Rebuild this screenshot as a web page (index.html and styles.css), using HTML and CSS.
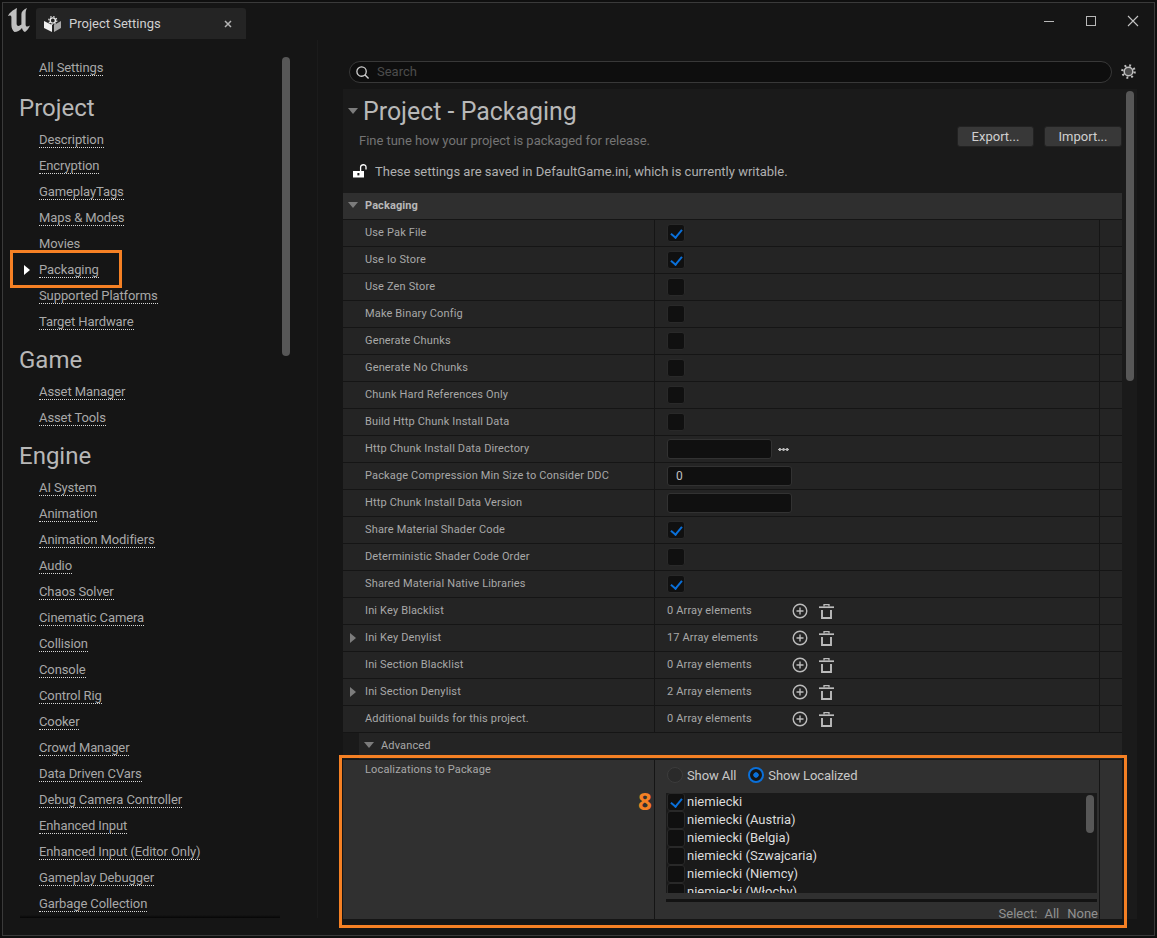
FILE: index.html
```html
<!DOCTYPE html>
<html lang="en">
<head>
  <meta charset="UTF-8">
  <title>Project Settings</title>
  <link rel="stylesheet" href="styles.css">
</head>
<body>
  <div class="window">
    <div class="titlebar">
      <svg class="ue-logo" viewBox="0 0 22 24"><path d="M0 8 C1 5 5 2 9 0 L8.6 2.5 V15.5 C8.6 18 10.5 19 13.4 16.6 V6 C13.4 3.5 15.5 1.5 19 0 C18 2 17.6 3.5 17.6 6 V16.5 C17.6 18.5 19 19.5 22 17.5 C21 20 19 22.5 17 24 C15.5 23.5 14.4 22 14 20 C12 22.5 9 24 6.5 24 C4.5 22.5 3.4 20 3.4 17 V9 C3.4 7.5 2 7 0 8 Z" fill="#c0c0c0"/></svg>
      <div class="tab">
        <svg class="tab-icon" viewBox="0 0 17 17"><path d="M0 6 L8 10 V17 L0 13 Z" fill="#f0f0f0"/><path d="M17 6 L10 10 V17 L17 13 Z" fill="#a8a8a8"/><circle cx="8.8" cy="5.5" r="2.6" fill="none" stroke="#e8e8e8" stroke-width="1.4"/><circle cx="8.8" cy="5.5" r="4" fill="none" stroke="#e8e8e8" stroke-width="1.2" stroke-dasharray="1.4 1.74"/></svg>
        <span class="tab-name">Project Settings</span>
        <svg class="tab-close" viewBox="0 0 8 8"><path d="M1 1 L7 7 M7 1 L1 7" stroke="#b4b4b4" stroke-width="1.5"/></svg>
      </div>
      <div class="win-buttons">
        <svg viewBox="0 0 12 12"><path d="M1 6.5 H11" stroke="#b8b8b8" stroke-width="1"/></svg>
        <svg viewBox="0 0 12 12"><rect x="1.5" y="1.5" width="9" height="9" fill="none" stroke="#b8b8b8" stroke-width="1"/></svg>
        <svg viewBox="0 0 12 12"><path d="M1 1 L11 11 M11 1 L1 11" stroke="#c4c4c4" stroke-width="1.1"/></svg>
      </div>
    </div>

    <div class="columns">
      <div class="sidebar">
        <div class="sidebar-scroll">
          <a class="side-link first"><span>All Settings</span></a>
          <h2>Project</h2>
          <a class="side-link"><span>Description</span></a>
          <a class="side-link"><span>Encryption</span></a>
          <a class="side-link"><span>GameplayTags</span></a>
          <a class="side-link"><span>Maps &amp; Modes</span></a>
          <a class="side-link"><span class="plain">Movies</span></a>
          <a class="side-link current"><i class="side-arrow"></i><span>Packaging</span></a>
          <a class="side-link"><span>Supported Platforms</span></a>
          <a class="side-link"><span>Target Hardware</span></a>
          <h2>Game</h2>
          <a class="side-link"><span>Asset Manager</span></a>
          <a class="side-link"><span>Asset Tools</span></a>
          <h2>Engine</h2>
          <a class="side-link"><span>AI System</span></a>
          <a class="side-link"><span>Animation</span></a>
          <a class="side-link"><span>Animation Modifiers</span></a>
          <a class="side-link"><span>Audio</span></a>
          <a class="side-link"><span>Chaos Solver</span></a>
          <a class="side-link"><span>Cinematic Camera</span></a>
          <a class="side-link"><span>Collision</span></a>
          <a class="side-link"><span>Console</span></a>
          <a class="side-link"><span>Control Rig</span></a>
          <a class="side-link"><span>Cooker</span></a>
          <a class="side-link"><span>Crowd Manager</span></a>
          <a class="side-link"><span>Data Driven CVars</span></a>
          <a class="side-link"><span>Debug Camera Controller</span></a>
          <a class="side-link"><span>Enhanced Input</span></a>
          <a class="side-link"><span>Enhanced Input (Editor Only)</span></a>
          <a class="side-link"><span>Gameplay Debugger</span></a>
          <a class="side-link"><span>Garbage Collection</span></a>
        </div>
        <div class="side-thumb"></div>
      </div>

      <div class="main">
        <div class="search-row">
          <div class="search">
            <svg class="search-icon" viewBox="0 0 16 16"><circle cx="7" cy="7" r="5" fill="none" stroke="#d0d0d0" stroke-width="1.4"/><path d="M10.5 10.5 L14.5 14.5" stroke="#d0d0d0" stroke-width="1.5"/></svg>
            <span>Search</span>
          </div>
          <svg class="gear" viewBox="0 0 16 16"><circle cx="8" cy="8" r="4.6" fill="#4a4a4a" stroke="#c0c0c0" stroke-width="1.6"/><circle cx="8" cy="8" r="6.6" fill="none" stroke="#c0c0c0" stroke-width="2.4" stroke-dasharray="2 3.18"/></svg>
        </div>

        <div class="details">
          <div class="details-scroll">
            <div class="page-head">
              <div class="page-title"><i class="tri-down"></i><h1>Project - Packaging</h1></div>
              <div class="page-sub">
                <p>Fine tune how your project is packaged for release.</p>
                <div class="page-buttons"><button>Export...</button><button>Import...</button></div>
              </div>
              <div class="page-note">
                <svg class="lock" viewBox="0 0 14 14"><path d="M0 7 H11 V13.5 H0 Z" fill="#fff"/><path d="M7.6 7 V3 C7.6 0 13 0 13 3 V5.5" fill="none" stroke="#fff" stroke-width="1.3"/><rect x="4.4" y="9" width="2" height="2.4" fill="#1a1a1a"/></svg>
                <span>These settings are saved in DefaultGame.ini, which is currently writable.</span>
              </div>
            </div>

            <div class="section-head"><i class="tri-down"></i>Packaging</div>

            <div class="row"><div class="name">Use Pak File</div><div class="value"><i class="check on"></i></div><div class="tail"></div></div>
            <div class="row"><div class="name">Use Io Store</div><div class="value"><i class="check on"></i></div><div class="tail"></div></div>
            <div class="row"><div class="name">Use Zen Store</div><div class="value"><i class="check"></i></div><div class="tail"></div></div>
            <div class="row"><div class="name">Make Binary Config</div><div class="value"><i class="check"></i></div><div class="tail"></div></div>
            <div class="row"><div class="name">Generate Chunks</div><div class="value"><i class="check"></i></div><div class="tail"></div></div>
            <div class="row"><div class="name">Generate No Chunks</div><div class="value"><i class="check"></i></div><div class="tail"></div></div>
            <div class="row"><div class="name">Chunk Hard References Only</div><div class="value"><i class="check"></i></div><div class="tail"></div></div>
            <div class="row"><div class="name">Build Http Chunk Install Data</div><div class="value"><i class="check"></i></div><div class="tail"></div></div>
            <div class="row"><div class="name">Http Chunk Install Data Directory</div><div class="value"><div class="field short"></div><span class="dots"></span></div><div class="tail"></div></div>
            <div class="row"><div class="name">Package Compression Min Size to Consider DDC</div><div class="value"><div class="field">0</div></div><div class="tail"></div></div>
            <div class="row"><div class="name">Http Chunk Install Data Version</div><div class="value"><div class="field"></div></div><div class="tail"></div></div>
            <div class="row"><div class="name">Share Material Shader Code</div><div class="value"><i class="check on"></i></div><div class="tail"></div></div>
            <div class="row"><div class="name">Deterministic Shader Code Order</div><div class="value"><i class="check"></i></div><div class="tail"></div></div>
            <div class="row"><div class="name">Shared Material Native Libraries</div><div class="value"><i class="check on"></i></div><div class="tail"></div></div>
            <div class="row"><div class="name">Ini Key Blacklist</div><div class="value"><span class="count">0 Array elements</span><svg class="add" viewBox="0 0 16 16"><use href="#icon-add"/></svg><svg class="trash" viewBox="0 0 15 15"><use href="#icon-trash"/></svg></div><div class="tail"></div></div>
            <div class="row"><div class="name"><i class="tri-right"></i>Ini Key Denylist</div><div class="value"><span class="count">17 Array elements</span><svg class="add" viewBox="0 0 16 16"><use href="#icon-add"/></svg><svg class="trash" viewBox="0 0 15 15"><use href="#icon-trash"/></svg></div><div class="tail"></div></div>
            <div class="row"><div class="name">Ini Section Blacklist</div><div class="value"><span class="count">0 Array elements</span><svg class="add" viewBox="0 0 16 16"><use href="#icon-add"/></svg><svg class="trash" viewBox="0 0 15 15"><use href="#icon-trash"/></svg></div><div class="tail"></div></div>
            <div class="row"><div class="name"><i class="tri-right"></i>Ini Section Denylist</div><div class="value"><span class="count">2 Array elements</span><svg class="add" viewBox="0 0 16 16"><use href="#icon-add"/></svg><svg class="trash" viewBox="0 0 15 15"><use href="#icon-trash"/></svg></div><div class="tail"></div></div>
            <div class="row"><div class="name">Additional builds for this project.</div><div class="value"><span class="count">0 Array elements</span><svg class="add" viewBox="0 0 16 16"><use href="#icon-add"/></svg><svg class="trash" viewBox="0 0 15 15"><use href="#icon-trash"/></svg></div><div class="tail"></div></div>

            <div class="advanced"><div class="advanced-inner"><i class="tri-down small"></i>Advanced</div></div>

            <div class="row tall">
              <div class="name">Localizations to Package</div>
              <div class="value">
                <div class="radios">
                  <i class="radio"></i><span>Show All</span>
                  <i class="radio on"></i><span>Show Localized</span>
                </div>
                <div class="culture-list">
                  <div class="culture"><i class="check on"></i>niemiecki</div>
                  <div class="culture"><i class="check"></i>niemiecki (Austria)</div>
                  <div class="culture"><i class="check"></i>niemiecki (Belgia)</div>
                  <div class="culture"><i class="check"></i>niemiecki (Szwajcaria)</div>
                  <div class="culture"><i class="check"></i>niemiecki (Niemcy)</div>
                  <div class="culture"><i class="check"></i>niemiecki (Włochy)</div>
                  <div class="list-thumb"></div>
                </div>
                <div class="list-hbar"></div>
                <div class="select-links"><span>Select:</span><span>All</span><span>None</span></div>
              </div>
              <div class="tail"></div>
            </div>
          </div>
          <div class="details-thumb"></div>
        </div>
      </div>
    </div>
  </div>

  <!-- callouts drawn over the screenshot -->
  <div class="callout callout-nav"></div>
  <div class="callout callout-loc"></div>
  <div class="callout-num">8</div>

  <svg class="icon-defs" width="0" height="0">
    <symbol id="icon-add" viewBox="0 0 16 16"><circle cx="8" cy="8" r="6.8" fill="none" stroke="#bcbcbc" stroke-width="1.4"/><path d="M8 4.5 V11.5 M4.5 8 H11.5" stroke="#bcbcbc" stroke-width="1.4"/></symbol>
    <symbol id="icon-trash" viewBox="0 0 15 15"><path d="M0 3.2 H15" stroke="#bcbcbc" stroke-width="1.7"/><path d="M5 2.6 V0.7 H10 V2.6" fill="none" stroke="#bcbcbc" stroke-width="1.3"/><path d="M3 6 V14 H12 V6" fill="none" stroke="#bcbcbc" stroke-width="1.9"/></symbol>
  </svg>
</body>
</html>
```

FILE: styles.css
```css
* {
  margin: 0;
  padding: 0;
  box-sizing: border-box;
}
html, body {
  height: 100%;
}
body {
  background: #0f0f0f;
  font-family: Roboto, sans-serif;
  font-size: 12px;
  color: #b8b8b8;
  overflow: hidden;
  position: relative;
}
.icon-defs {
  position: absolute;
}
.window {
  margin: 2px 2px 2px 2px;
  height: calc(100% - 4px);
  background: #151515;
  border: 1px solid #3a3a3a;
  display: flex;
  flex-direction: column;
}

/* title bar */
.titlebar {
  height: 37px;
  flex: none;
  display: flex;
  align-items: flex-start;
  position: relative;
}
.ue-logo {
  width: 22px;
  height: 24px;
  margin: 5px 0 0 5px;
}
.tab {
  width: 210px;
  height: 31px;
  margin: 5px 0 0 6px;
  background: #242424;
  border-radius: 3px 3px 0 0;
  display: flex;
  align-items: center;
  padding-left: 8px;
}
.tab-icon {
  width: 17px;
  height: 17px;
}
.tab-name {
  margin-left: 8px;
  font-size: 13px;
  color: #d0d0d0;
  flex: 1;
}
.tab-close {
  width: 8px;
  height: 8px;
  margin-right: 14px;
}
.win-buttons {
  margin-left: auto;
  display: flex;
  gap: 30px;
  padding: 12px 15px 0 0;
}
.win-buttons svg {
  width: 12px;
  height: 12px;
}

.columns {
  flex: 1;
  display: flex;
  min-height: 0;
}

/* left nav */
.sidebar {
  width: 315px;
  flex: none;
  border-right: 1px solid #1b1b1b;
  position: relative;
  height: 878px;
}
.sidebar-scroll {
  height: 100%;
  overflow: hidden;
  padding-top: 15px;
  position: relative;
}
.sidebar-scroll::after {
  content: "";
  position: absolute;
  left: 17px;
  width: 260px;
  bottom: 0;
  height: 3px;
  background: linear-gradient(to bottom, rgba(0,0,0,0), #050505);
}
.side-thumb {
  position: absolute;
  left: 279px;
  top: 17px;
  width: 8px;
  height: 299px;
  border-radius: 4px;
  background: #575757;
}
.sidebar h2 {
  font-weight: 400;
  font-size: 24px;
  line-height: 44px;
  height: 44px;
  padding: 3px 0 0 16px;
  color: #b8b8b8;
}
.side-link {
  display: flex;
  align-items: center;
  height: 26px;
  padding-left: 36px;
  font-size: 13px;
  letter-spacing: -0.1px;
  color: #a8a8a8;
}
.side-link.first {
  margin-bottom: 2px;
}
.side-link span {
  border-bottom: 1px dotted #d8d8d8;
  line-height: 14px;
}
.side-link span.plain {
  border-bottom: none;
}
.side-link.current {
  padding-left: 21px;
}
.side-arrow {
  width: 0;
  height: 0;
  border-left: 6px solid #fff;
  border-top: 5px solid transparent;
  border-bottom: 5px solid transparent;
  margin-right: 9px;
}

/* right side */
.main {
  flex: 1;
  padding-left: 25px;
  min-width: 0;
}
.search-row {
  height: 49px;
  display: flex;
  align-items: flex-start;
  padding: 21px 0 0 6px;
}
.search {
  width: 763px;
  height: 22px;
  background: #0e0e0e;
  border: 1px solid #383838;
  border-radius: 11px;
  display: flex;
  align-items: center;
  padding-left: 5px;
  color: #4c4c4c;
  font-size: 13px;
}
.search span {
  padding-bottom: 2px;
}
.search-icon {
  width: 15px;
  height: 15px;
  margin-right: 7px;
}
.gear {
  width: 15px;
  height: 15px;
  margin: 3px 0 0 9px;
}
.details {
  width: 794px;
  height: 830px;
  background: #1a1a1a;
  position: relative;
  overflow: hidden;
}
.details-scroll {
  width: 779px;
}
.details-thumb {
  position: absolute;
  left: 783px;
  top: 2px;
  width: 8px;
  height: 290px;
  border-radius: 4px;
  background: #575757;
}

/* page heading */
.page-head {
  height: 104px;
  padding: 7px 0 0 5px;
}
.page-title {
  display: flex;
  align-items: center;
  height: 30px;
}
.page-title .tri-down {
  margin-right: 5px;
}
.page-title h1 {
  font-weight: 400;
  font-size: 24.9px;
  color: #b8b8b8;
}
.page-sub {
  display: flex;
  justify-content: space-between;
  align-items: center;
  height: 24px;
  margin-top: 2px;
  padding-left: 11px;
}
.page-sub p {
  font-size: 13px;
  letter-spacing: -0.04px;
  color: #747474;
}
.page-buttons {
  display: flex;
  gap: 10px;
  margin-top: -8px;
}
.page-buttons button {
  width: 77px;
  height: 21px;
  border: 1px solid #222;
  border-radius: 3px;
  background: #383838;
  color: #d0d0d0;
  font: 13px Roboto, sans-serif;
}
.page-buttons button + button {
  width: 78px;
}
.page-note {
  display: flex;
  align-items: center;
  height: 24px;
  margin-top: 7px;
  padding-left: 5px;
  font-size: 13px;
  color: #b0b0b0;
}
.lock {
  width: 14px;
  height: 14px;
  margin-right: 8px;
}

.tri-down {
  display: inline-block;
  width: 0;
  height: 0;
  border-top: 6px solid #7c7c7c;
  border-left: 5px solid transparent;
  border-right: 5px solid transparent;
}
.tri-down.small {
  margin-right: 7px;
}
.tri-right {
  position: absolute;
  left: 7px;
  top: 8px;
  width: 0;
  height: 0;
  border-left: 6px solid #7c7c7c;
  border-top: 5px solid transparent;
  border-bottom: 5px solid transparent;
}

/* property rows */
.section-head {
  height: 26px;
  background: #2f2f2f;
  display: flex;
  align-items: center;
  padding: 0 0 2px 5px;
  font-weight: 700;
  font-size: 11px;
  color: #b8b8b8;
  letter-spacing: 0.1px;
}
.section-head .tri-down {
  margin-right: 7px;
}
.row {
  display: grid;
  grid-template-columns: 311px 445px 23px;
  height: 27px;
  background: #242424;
  border-top: 1px solid #151515;
  font-size: 11px;
  letter-spacing: 0.15px;
  color: #a8a8a8;
}
.row > div + div {
  border-left: 1px solid #151515;
}
.name {
  position: relative;
  display: flex;
  align-items: center;
  padding-left: 22px;
  padding-bottom: 2px;
}
.value {
  display: flex;
  align-items: center;
  padding-left: 12px;
}
.check {
  display: block;
  flex: none;
  width: 18px;
  height: 18px;
  background: #101010;
  border: 1px solid #292929;
  border-radius: 3px;
  position: relative;
}
.check.on::after {
  content: "";
  position: absolute;
  left: 5px;
  top: 2px;
  width: 5px;
  height: 9px;
  border: solid #0a70da;
  border-width: 0 2px 2px 0;
  transform: rotate(40deg);
}
.field {
  width: 125px;
  height: 20px;
  background: #101010;
  border: 1px solid #323232;
  border-radius: 3px;
  font-size: 12px;
  line-height: 18px;
  padding-left: 8px;
  color: #c0c0c0;
}
.field.short {
  width: 105px;
}
.dots {
  display: block;
  width: 11px;
  height: 3px;
  margin-left: 6px;
  background: radial-gradient(circle, #b8b8b8 1.4px, transparent 1.6px) 0 0 / 3.7px 3px;
}
.count {
  width: 125px;
  padding-bottom: 2px;
}
.add {
  width: 16px;
  height: 16px;
  margin-left: 0;
}
.trash {
  width: 15px;
  height: 15px;
  margin-left: 11px;
}

.advanced {
  height: 27px;
  background: #1a1a1a;
  padding-left: 16px;
  border-top: 1px solid #151515;
}
.advanced-inner {
  height: 26px;
  background: #242424;
  display: flex;
  align-items: center;
  padding: 0 0 2px 5px;
  font-size: 11px;
  letter-spacing: 0.15px;
  color: #a8a8a8;
}
.row.tall {
  height: 160px;
  background: #303030;
  overflow: hidden;
}
.row.tall .name {
  align-items: flex-start;
  padding-top: 3px;
}
.row.tall .value {
  display: block;
}
.radios {
  display: flex;
  align-items: center;
  height: 30px;
  margin-bottom: 3px;
  font-size: 13px;
  letter-spacing: -0.1px;
  color: #c8c8c8;
}
.radio {
  display: block;
  width: 16px;
  height: 16px;
  border: 1px solid #3c3c3c;
  border-radius: 50%;
  background: #2a2a2a;
  margin-right: 4px;
}
.radio.on {
  margin-left: 12px;
  border: 2px solid #0a70da;
  background: radial-gradient(circle, #0a70da 2.4px, #151515 3px);
}
.culture-list {
  position: relative;
  width: 431px;
  margin-left: -1px;
  height: 100px;
  background: #1a1a1a;
  overflow: hidden;
}
.culture {
  display: flex;
  align-items: flex-start;
  height: 18px;
  font-size: 13px;
  line-height: 17px;
  letter-spacing: 0;
  color: #dcdcdc;
}
.culture .check {
  margin-right: 2px;
  margin-left: 1px;
}
.list-thumb {
  position: absolute;
  left: 420px;
  top: 2px;
  width: 8px;
  height: 38px;
  border-radius: 4px;
  background: #575757;
}
.list-hbar {
  width: 431px;
  margin: 6px 0 0 -1px;
  height: 3px;
  background: #131313;
}
.select-links {
  display: flex;
  justify-content: flex-end;
  gap: 8px;
  width: 431px;
  margin-top: 4px;
  font-size: 13px;
  letter-spacing: 0;
  color: #909090;
}
.select-links span:first-child {
  margin-right: -1px;
}

/* orange callouts */
.callout {
  position: absolute;
  border: 3px solid #f58024;
}
.callout-nav {
  left: 10px;
  top: 250px;
  width: 112px;
  height: 38px;
}
.callout-loc {
  left: 339px;
  top: 755px;
  width: 788px;
  height: 173px;
}
.callout-num {
  position: absolute;
  left: 638px;
  top: 784px;
  font: 700 24px "Open Sans", sans-serif;
  color: #f58024;
}
```
